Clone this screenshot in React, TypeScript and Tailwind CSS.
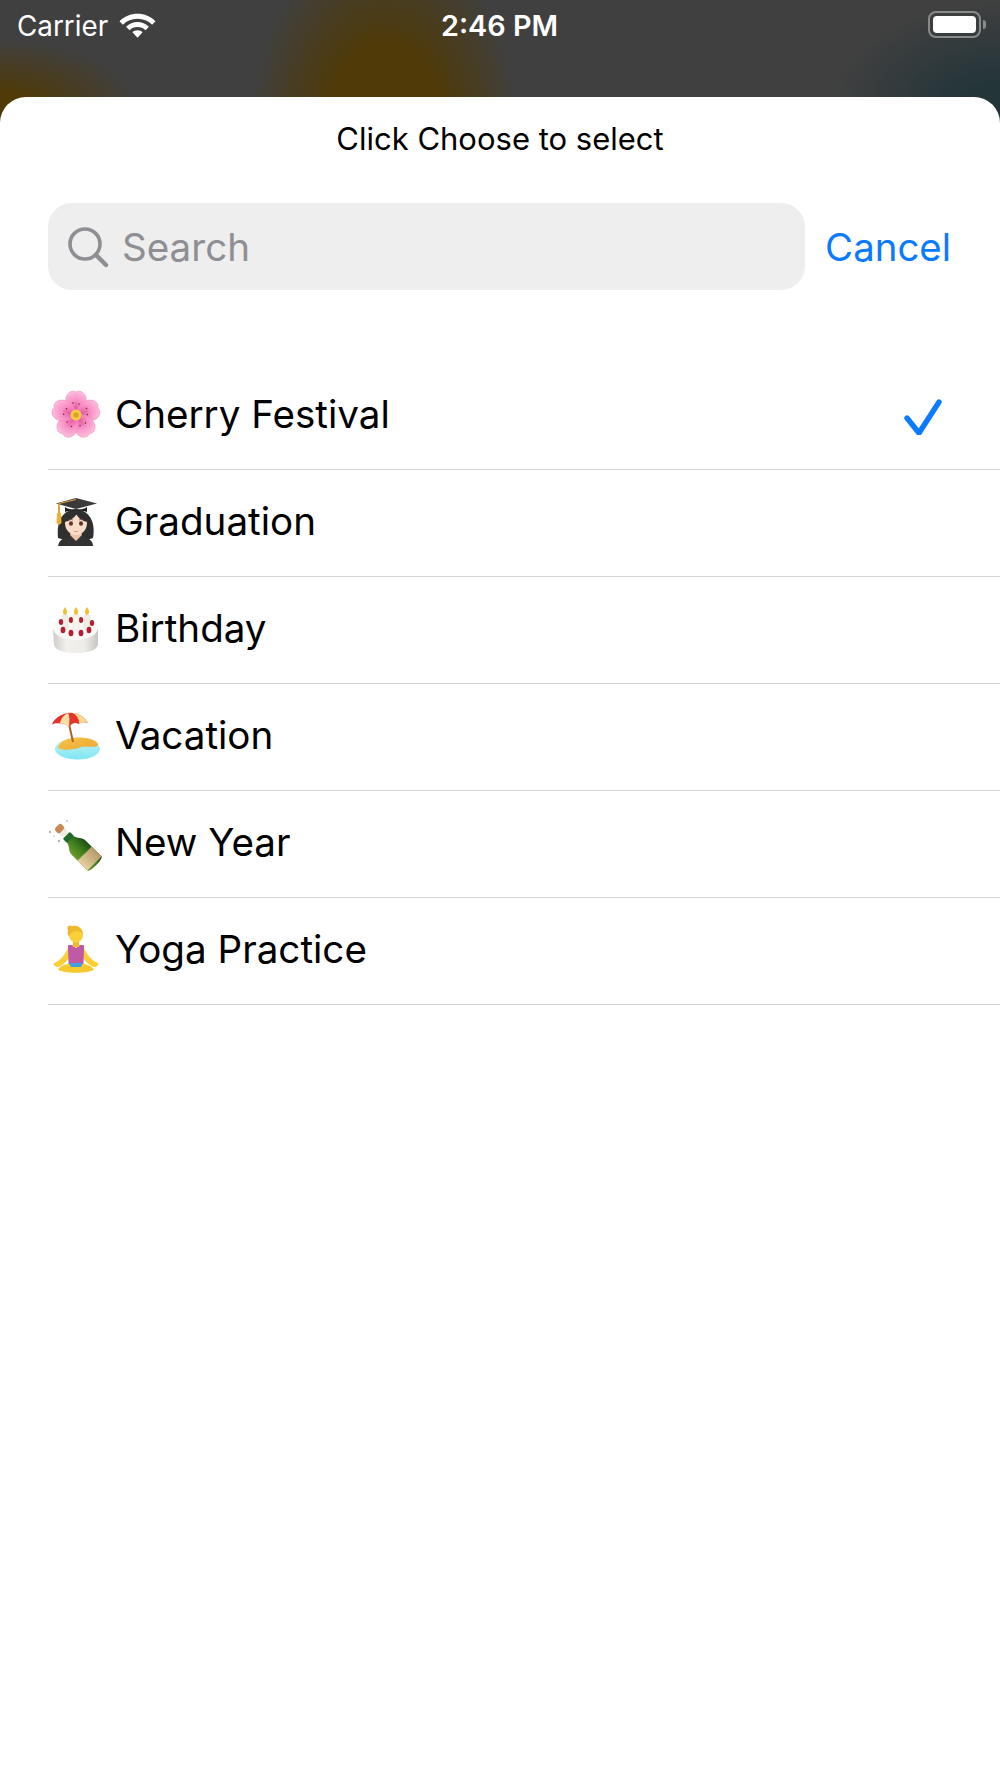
import { ReactNode } from "react";

const fontStack = "font-['Inter','Noto_Sans',sans-serif]";

function CherryIcon() {
  const petals = [0, 72, 144, 216, 288];
  return (
    <svg width="52" height="52" viewBox="0 0 52 52" className="overflow-visible">
      <defs>
        <radialGradient id="petal" cx="50%" cy="75%" r="75%">
          <stop offset="0%" stopColor="#e85fa6" />
          <stop offset="45%" stopColor="#f88cc4" />
          <stop offset="100%" stopColor="#fdbcdc" />
        </radialGradient>
      </defs>
      {petals.map((angle) => (
        <g key={angle} transform={`rotate(${angle} 28 25)`}>
          <path
            d="M28 25 C20 21 16 13 18.5 6 C20.5 1.5 25 0 28 2 C31 0 35.5 1.5 37.5 6 C40 13 36 21 28 25 Z"
            fill="url(#petal)"
            stroke="#f07fb8"
            strokeWidth="0.5"
          />
          <path d="M28 24 L28 12" stroke="#e55a9f" strokeWidth="0.8" />
          <circle cx="25" cy="13" r="0.8" fill="#6b3050" />
          <circle cx="31" cy="14" r="0.8" fill="#6b3050" />
        </g>
      ))}
      <circle cx="28" cy="25" r="5.5" fill="#f3cb45" />
      <circle cx="28" cy="25" r="2.6" fill="#e0a02c" />
    </svg>
  );
}

function GraduateIcon() {
  return (
    <svg width="52" height="52" viewBox="0 0 52 52" className="overflow-visible">
      <path d="M10 41 C9 30 10 14 28 12 C45 14 47 30 45 41 C38 44 18 44 10 41 Z" fill="#2f2f30" />
      <path d="M10 49 C11 43 16 40 22 39 L34 39 C39 40 45 43 45 49 Z" fill="#333334" />
      <path d="M22 38 L28 44 L34 38 L32 32 L24 32 Z" fill="#eec3a8" />
      <ellipse cx="28" cy="26" rx="11" ry="12" fill="#f9dcc8" />
      <path d="M16.5 25 C16 16 22 13 28 13 C34 13 40 16 39.5 25 C34 24 30.5 21 28.5 17.5 C26 21 21.5 24 16.5 25 Z" fill="#2f2f30" />
      <ellipse cx="23" cy="26.5" rx="2" ry="2.3" fill="#5c3422" />
      <ellipse cx="33" cy="26.5" rx="2" ry="2.3" fill="#5c3422" />
      <path d="M20.5 23 Q23 21.8 25 23 M31 23 Q33 21.8 35.5 23" stroke="#7a5240" strokeWidth="0.8" fill="none" />
      <path d="M25 33.5 Q28 35 31 33.5 Q28 36.5 25 33.5 Z" fill="#d97f72" />
      <path d="M8 6.5 L28 1 L49 6.5 L28 12 Z" fill="#3a3a3b" />
      <path d="M17 10 C21 13.5 35 13.5 39 10 L39 15 C34 12.5 22 12.5 17 15 Z" fill="#1e1e1f" />
      <path d="M11 6.5 L28 2.5" stroke="#e0a23a" strokeWidth="1.2" />
      <rect x="10" y="6.5" width="2" height="10" fill="#e0a23a" />
      <path d="M9 16 L13 16 L13.5 26 L11 28 L8.5 26 Z" fill="#efae38" />
    </svg>
  );
}

function CakeIcon() {
  return (
    <svg width="52" height="52" viewBox="0 0 52 52" className="overflow-visible">
      <defs>
        <linearGradient id="cakeSide" x1="0" y1="0" x2="1" y2="0">
          <stop offset="0%" stopColor="#cfcdc8" />
          <stop offset="30%" stopColor="#f1f0ec" />
          <stop offset="70%" stopColor="#eeece8" />
          <stop offset="100%" stopColor="#c8c6c1" />
        </linearGradient>
      </defs>
      <path d="M5 25 L6 41 C8 47 17 49 28 49 C39 49 48 47 50 41 L50 25 Z" fill="url(#cakeSide)" />
      <ellipse cx="27.5" cy="24" rx="22.5" ry="12" fill="#fafaf8" />
      {[17, 39].map((x) => (
        <g key={x}>
          <rect x={x - 3} y="11" width="6" height="15" rx="1" fill="#f0eee6" stroke="#d8d5cb" strokeWidth="0.4" />
          <path d={`M${x} 3 C${x + 3} 7 ${x + 2.5} 10 ${x} 11 C${x - 2.5} 10 ${x - 3} 7 ${x} 3 Z`} fill="#f2c02e" />
        </g>
      ))}
      {[
        [13, 16],
        [23, 14],
        [33, 14],
        [44, 17],
      ].map(([x, y]) => (
        <ellipse key={x} cx={x} cy={y + 2} rx="2.2" ry="3" fill="#b3202f" />
      ))}
      <rect x="25" y="10" width="6" height="16" rx="1" fill="#f6f4ec" stroke="#d8d5cb" strokeWidth="0.4" />
      <path d="M28 3 C31 7 30.5 10 28 11 C25.5 10 25 7 28 3 Z" fill="#f2c02e" />
      {[
        [15, 26],
        [23, 29],
        [33, 29],
        [41, 26],
      ].map(([x, y]) => (
        <ellipse key={x} cx={x} cy={y} rx="2.4" ry="3.2" fill="#b3202f" />
      ))}
    </svg>
  );
}

function BeachIcon() {
  return (
    <svg width="52" height="52" viewBox="0 0 52 52" className="overflow-visible">
      <defs>
        <linearGradient id="water" x1="0" y1="0" x2="0" y2="1">
          <stop offset="0%" stopColor="#bff2ee" />
          <stop offset="100%" stopColor="#7fe6f5" />
        </linearGradient>
        <linearGradient id="sand" x1="0" y1="0" x2="1" y2="1">
          <stop offset="0%" stopColor="#f6c64b" />
          <stop offset="100%" stopColor="#eda531" />
        </linearGradient>
      </defs>
      <ellipse cx="29.5" cy="38" rx="22.5" ry="10.5" fill="url(#water)" />
      <path d="M10 37 C11 30 20 26.5 30 26.5 C40 26.5 50 29 50 34 C46 38 40 34 33 36 C26 39 15 40 10 37 Z" fill="url(#sand)" />
      <path d="M21 13 L25 31" stroke="#a5672e" strokeWidth="2" />
      <path d="M4 13.5 C6 7.5 13 3 20 2 C27 1 36 4 40 12 C36 11 33 11 31 13 C27 11 24 12 21 16 C18 13 14 12 12 12.5 C9 12 6 12.5 4 13.5 Z" fill="#e8332c" />
      <path d="M12 12.5 C12.5 8 16 4 20 2 C22 5 21.5 11 21 16 C18 13 14 12 12 12.5 Z" fill="#f6e0a4" />
      <path d="M31 13 C32 9 28 3 24 1.8 C31 2 37 6 40 12 C36 11 33 11 31 13 Z" fill="#f3d88f" />
    </svg>
  );
}

function BottleIcon() {
  return (
    <svg width="52" height="52" viewBox="0 0 52 52" className="overflow-visible">
      <defs>
        <linearGradient id="glass" x1="0" y1="0" x2="1" y2="0">
          <stop offset="0%" stopColor="#6d9b2e" />
          <stop offset="55%" stopColor="#3d7a1c" />
          <stop offset="100%" stopColor="#1d4d1a" />
        </linearGradient>
        <linearGradient id="label" x1="0" y1="0" x2="1" y2="0">
          <stop offset="0%" stopColor="#e6d0a0" />
          <stop offset="100%" stopColor="#b79a68" />
        </linearGradient>
      </defs>
      <g transform="translate(43 42) rotate(-45)">
        <path d="M-10 5 C-10 8 10 8 10 5 L10 -17 C10 -23 5 -24 4.5 -30 L-4.5 -30 C-5 -24 -10 -23 -10 -17 Z" fill="url(#glass)" />
        <rect x="-10" y="-9" width="20" height="14" fill="url(#label)" />
        <rect x="-5" y="-35" width="10" height="6" rx="1.5" fill="#1f6b2c" />
        <path d="M-3.5 -35 L3.5 -35 L4.5 -42 L-4.5 -42 Z" fill="#efece3" />
        <rect x="-4.5" y="-48" width="9" height="7" rx="2.5" fill="#c98a56" />
      </g>
      <circle cx="2" cy="14" r="1.2" fill="#b9b3a5" />
      <circle cx="11" cy="23" r="1.2" fill="#b9b3a5" />
      <circle cx="19" cy="3" r="1" fill="#c8c3b6" />
      <circle cx="6" cy="18" r="0.8" fill="#c8c3b6" />
    </svg>
  );
}

function YogaIcon() {
  return (
    <svg width="52" height="52" viewBox="0 0 52 52" className="overflow-visible">
      <path d="M6 38 C12 36 17 30 21 21 L25 23 C23 32 17 40 10 42 C7 42 5 40 6 38 Z" fill="#f9d038" />
      <path d="M50 38 C44 36 39 30 35 21 L31 23 C33 32 39 40 46 42 C49 42 51 40 50 38 Z" fill="#f9d038" />
      <path d="M10 44 C16 38 24 38 28 40 C32 38 40 38 46 44 C44 49 12 49 10 44 Z" fill="#f7c92f" />
      <path d="M20 20 L24 20 L28 23 L32 20 L36 20 L35.5 39 L20.5 39 Z" fill="#c05aa6" />
      <path d="M21 38 L35 38 L33 42 L23 42 Z" fill="#3f9fe0" />
      <rect x="25" y="15" width="6" height="7" fill="#f2bc24" />
      <ellipse cx="28" cy="10" rx="7" ry="7.5" fill="#f9d038" />
      <path d="M20 10 C19 5 21 1 25 1 C29 0 35 3 35 9 C31 5 25 5 21 11 Z" fill="#f0b92a" />
      <circle cx="22" cy="3" r="2.6" fill="#f0b92a" />
    </svg>
  );
}

function CarrierWifi() {
  return (
    <svg width="37" height="26" viewBox="0 0 38 26" fill="white">
      <path d="M19 0.5 C26 0.5 32.5 3.2 37.5 8 L34 11.6 C30 7.8 24.8 5.6 19 5.6 C13.2 5.6 8 7.8 4 11.6 L0.5 8 C5.5 3.2 12 0.5 19 0.5 Z" />
      <path d="M19 9 C23.4 9 27.6 10.7 30.7 13.8 L27.2 17.3 C25 15.2 22.1 14 19 14 C15.9 14 13 15.2 10.8 17.3 L7.3 13.8 C10.4 10.7 14.6 9 19 9 Z" />
      <path d="M19 17.4 C21 17.4 22.8 18.1 24.2 19.4 L19 25 L13.8 19.4 C15.2 18.1 17 17.4 19 17.4 Z" />
    </svg>
  );
}

function Battery() {
  return (
    <div className="flex items-center gap-[2px]">
      <div className="flex h-[27px] w-[53px] rounded-[8px] border-2 border-[#8a8a8a] p-[3px]">
        <div className="w-full rounded-[4px] bg-white" />
      </div>
      <div className="h-[9px] w-[3px] rounded-r-[3px] bg-[#8a8a8a]" />
    </div>
  );
}

function Row({ icon, label, checked }: { icon: ReactNode; label: string; checked?: boolean }) {
  return (
    <div className="flex h-[107px] items-center justify-between border-b border-[#d4d4d6]">
      <div className="flex items-center gap-[15px]">
        {icon}
        <span className="pb-[3px] text-[38.6px] leading-none text-black">{label}</span>
      </div>
      {checked && (
        <svg width="40" height="38" viewBox="0 0 40 38" fill="none" className="mr-[56px]">
          <path d="M3 21 L15 36 L35 5" stroke="#0a7aff" strokeWidth="5.4" strokeLinecap="round" strokeLinejoin="round" />
        </svg>
      )}
    </div>
  );
}

const rows = [
  { label: "Cherry Festival", icon: <CherryIcon />, checked: true },
  { label: "Graduation", icon: <GraduateIcon /> },
  { label: "Birthday", icon: <CakeIcon /> },
  { label: "Vacation", icon: <BeachIcon /> },
  { label: "New Year", icon: <BottleIcon /> },
  { label: "Yoga Practice", icon: <YogaIcon /> },
];

export default function App() {
  return (
    <div className={`flex h-[1778px] w-[1000px] flex-col overflow-hidden bg-[#404040] bg-[radial-gradient(ellipse_135px_200px_at_385px_135px,#4f3a08_45%,transparent_100%),radial-gradient(ellipse_170px_110px_at_1000px_110px,#24353a_25%,transparent_100%),radial-gradient(ellipse_140px_70px_at_0px_110px,#4f3a08_25%,transparent_100%)] ${fontStack}`}>
      <div className="flex h-[97px] items-start justify-between pl-[17px] pr-[14px] pt-[9px]">
        <div className="flex w-[300px] items-center gap-[11px]">
          <span className="text-[27.8px] leading-[34px] text-white">Carrier</span>
          <CarrierWifi />
        </div>
        <span className="mr-[4px] text-[28.8px] font-semibold leading-[34px] text-white">2:46 PM</span>
        <div className="flex w-[300px] justify-end pt-[2px]">
          <Battery />
        </div>
      </div>
      <div className="flex-1 rounded-t-[26px] bg-white">
        <div className="pt-[22px] text-center text-[31px] leading-[40px] text-black">Click Choose to select</div>
        <div className="mt-[44px] flex items-center pl-[48px] pr-[49px]">
          <div className="flex h-[87px] flex-1 items-center gap-[13px] rounded-[24px] bg-[#eeeeef] pl-[19px]">
            <svg width="42" height="42" viewBox="0 0 42 42" fill="none" stroke="#8e8e93" strokeWidth="3.6" strokeLinecap="round">
              <circle cx="18" cy="18" r="15" />
              <path d="M29 29 L39 39" strokeWidth="4.4" />
            </svg>
            <span className="pt-[2px] text-[38.6px] leading-none text-[#8e8e93]">Search</span>
          </div>
          <span className="ml-[20px] pt-[1px] text-[38.4px] leading-none text-[#0a7aff]">Cancel</span>
        </div>
        <div className="ml-[48px] mt-[73px]">
          {rows.map((row) => (
            <Row key={row.label} icon={row.icon} label={row.label} checked={row.checked} />
          ))}
        </div>
      </div>
    </div>
  );
}
